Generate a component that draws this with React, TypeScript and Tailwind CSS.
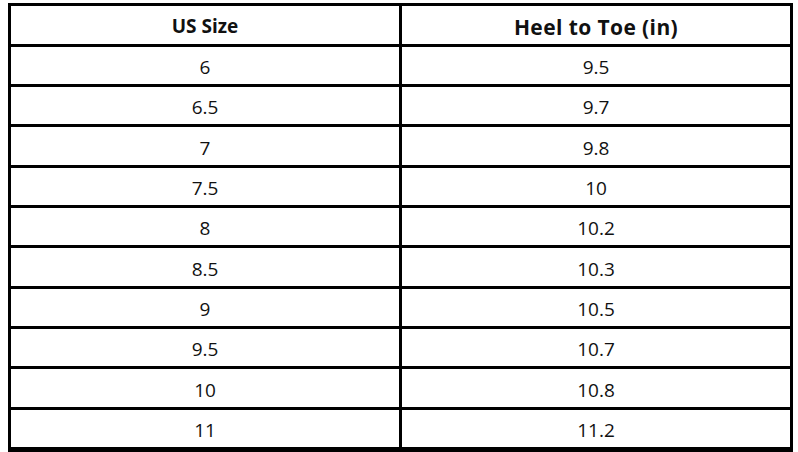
const rows: [string, string][] = [
  ["6", "9.5"],
  ["6.5", "9.7"],
  ["7", "9.8"],
  ["7.5", "10"],
  ["8", "10.2"],
  ["8.5", "10.3"],
  ["9", "10.5"],
  ["9.5", "10.7"],
  ["10", "10.8"],
  ["11", "11.2"],
];

const App = () => {
  return (
    <div className="w-[798px] h-[452px] overflow-hidden bg-white pl-[8px] pt-[3px] font-['Open_Sans',sans-serif] text-[#111]">
      <div className="w-[785px] border-[3px] border-black">
        <div className="grid grid-cols-[388px_3px_388px] h-[41px] border-b-[3px] border-black">
          <div className="flex items-center justify-center pt-[3px] text-[19px] font-bold">
            US Size
          </div>
          <div className="bg-black" />
          <div className="flex items-center justify-center pt-[5px] text-[21px] font-bold tracking-[0.4px]">
            Heel to Toe (in)
          </div>
        </div>
        {rows.map(([size, len], i) => (
          <div
            key={size}
            className={`grid grid-cols-[388px_3px_388px] border-b-[3px] border-black ${
              i % 3 === 2 ? "h-[41px]" : "h-[40px]"
            }`}
          >
            <div className="flex items-center justify-center pt-[4px] text-[19px]">
              {size}
            </div>
            <div className="bg-black" />
            <div className="flex items-center justify-center pt-[4px] text-[19px]">
              {len}
            </div>
          </div>
        ))}
      </div>
    </div>
  );
};

export default App;
